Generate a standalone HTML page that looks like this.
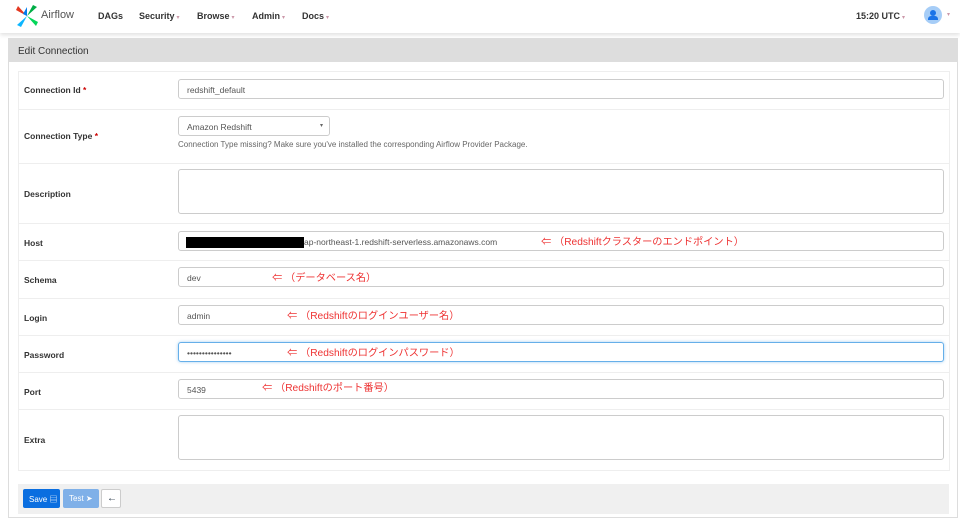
<!DOCTYPE html>
<html><head><meta charset="utf-8"><style>
*{box-sizing:border-box;margin:0;padding:0}
body{width:960px;height:510px;overflow:hidden;background:#fff;font-family:"Liberation Sans","Noto Sans CJK JP",sans-serif;font-size:9px;color:#333;position:relative}
.nav{position:absolute;left:0;top:0;width:960px;height:33px;background:#fff;box-shadow:0 2px 4px rgba(0,0,0,.12)}
.nav .m{position:absolute;top:11px;font-weight:bold;font-size:9px;color:#333}
.car{color:#c9a;font-weight:normal;font-size:6px;margin-left:2px}
.panel{position:absolute;left:8px;top:38px;width:950px;height:480px;border:1px solid #ddd;background:#fff}
.ph{height:23px;background:#ddd;padding:7px 9px;font-size:10px;color:#333}
.tbl{position:absolute;left:9px;top:32px;width:932px;border:1px solid #eee}
.row{position:relative;border-top:1px solid #eee}
.row:first-child{border-top:none}
.lab{position:absolute;left:5px;font-weight:bold;font-size:8.5px;color:#333}
.req{color:#c00}
.inp{position:absolute;left:159px;width:766px;height:20px;border:1px solid #ccc;border-radius:3px;padding:5px 8px;font-size:8.5px;color:#555;background:#fff;white-space:nowrap}
.note{position:absolute;color:#e33;font-size:10.2px;white-space:nowrap}
.foot{position:absolute;left:18px;top:484px;width:931px;height:30px;background:#f0f0f0}
.btn{position:absolute;top:5px;height:19px;border-radius:2px;color:#fff;font-size:8px;padding:5px 6px;white-space:nowrap}
</style></head><body>
<div class="nav">
<svg style="position:absolute;left:15px;top:4px" width="24" height="24" viewBox="0 0 24 24"><path d="M12 12L3 2 1 6z" fill="#e43921"/><path d="M12 12L22 3 18 1z" fill="#00ad46"/><path d="M12 12L21 22 23 18z" fill="#04d659"/><path d="M12 12L2 21 6 23z" fill="#0cb6ff"/><path d="M12 12L12 3 8 10z" fill="#017cee"/></svg>
<span style="position:absolute;left:41px;top:9px;font-size:11px;color:#555">Airflow</span>
<span class="m" style="left:98px">DAGs</span>
<span class="m" style="left:139px">Security<span class="car">▾</span></span>
<span class="m" style="left:197px">Browse<span class="car">▾</span></span>
<span class="m" style="left:252px">Admin<span class="car">▾</span></span>
<span class="m" style="left:302px">Docs<span class="car">▾</span></span>
<span class="m" style="left:856px">15:20 UTC<span class="car">▾</span></span>
<div style="position:absolute;left:924px;top:6px;width:18px;height:18px;border-radius:50%;background:#a6cdf7"><div style="position:absolute;left:6px;top:4px;width:6px;height:6px;border-radius:50%;background:#1a73e8"></div><div style="position:absolute;left:4px;top:10px;width:10px;height:4px;border-radius:3px 3px 0 0;background:#1a73e8"></div></div>
<span class="car" style="position:absolute;left:945px;top:11px">▾</span>
</div>
<div class="panel"><div class="ph">Edit Connection</div>
<div class="tbl">
<div class="row" style="height:37px"><span class="lab" style="top:13px">Connection Id <span class="req">*</span></span><div class="inp" style="top:7px">redshift_default</div></div>
<div class="row" style="height:54px"><span class="lab" style="top:21px">Connection Type <span class="req">*</span></span><div class="inp" style="top:6px;width:152px">Amazon Redshift<span style="position:absolute;right:6px;font-size:6px;color:#666">▾</span></div><span style="position:absolute;left:159px;top:30px;font-size:8px;color:#666">Connection Type missing? Make sure you've installed the corresponding Airflow Provider Package.</span></div>
<div class="row" style="height:60px"><span class="lab" style="top:25px">Description</span><div class="inp" style="top:5px;height:45px"></div></div>
<div class="row" style="height:37px"><span class="lab" style="top:14px">Host</span><div class="inp" style="top:7px"><span style="display:inline-block;width:118px;height:11px;background:#000;vertical-align:middle;margin-left:-1px"></span>ap-northeast-1.redshift-serverless.amazonaws.com</div><span class="note" style="left:522px;top:9px">⇐ （Redshiftクラスターのエンドポイント）</span></div>
<div class="row" style="height:38px"><span class="lab" style="top:14px">Schema</span><div class="inp" style="top:6px">dev</div><span class="note" style="left:253px;top:8px">⇐ （データベース名）</span></div>
<div class="row" style="height:37px"><span class="lab" style="top:14px">Login</span><div class="inp" style="top:6px">admin</div><span class="note" style="left:268px;top:8px">⇐ （Redshiftのログインユーザー名）</span></div>
<div class="row" style="height:37px"><span class="lab" style="top:14px">Password</span><div class="inp" style="top:6px;border-color:#66afe9;box-shadow:0 0 3px rgba(102,175,233,.6)">•••••••••••••••</div><span class="note" style="left:268px;top:8px">⇐ （Redshiftのログインパスワード）</span></div>
<div class="row" style="height:37px"><span class="lab" style="top:14px">Port</span><div class="inp" style="top:6px">5439</div><span class="note" style="left:243px;top:6px">⇐ （Redshiftのポート番号）</span></div>
<div class="row" style="height:61px"><span class="lab" style="top:25px">Extra</span><div class="inp" style="top:5px;height:45px"></div></div>
</div></div>
<div class="foot">
<div class="btn" style="left:5px;width:37px;background:#0a6ee0">Save ▤</div>
<div class="btn" style="left:45px;width:36px;background:#7fb0e8">Test ➤</div>
<div class="btn" style="left:83px;width:20px;background:#fff;border:1px solid #ccc;color:#234;padding:3px 5px;font-size:10px">←</div>
</div>
</body></html>
